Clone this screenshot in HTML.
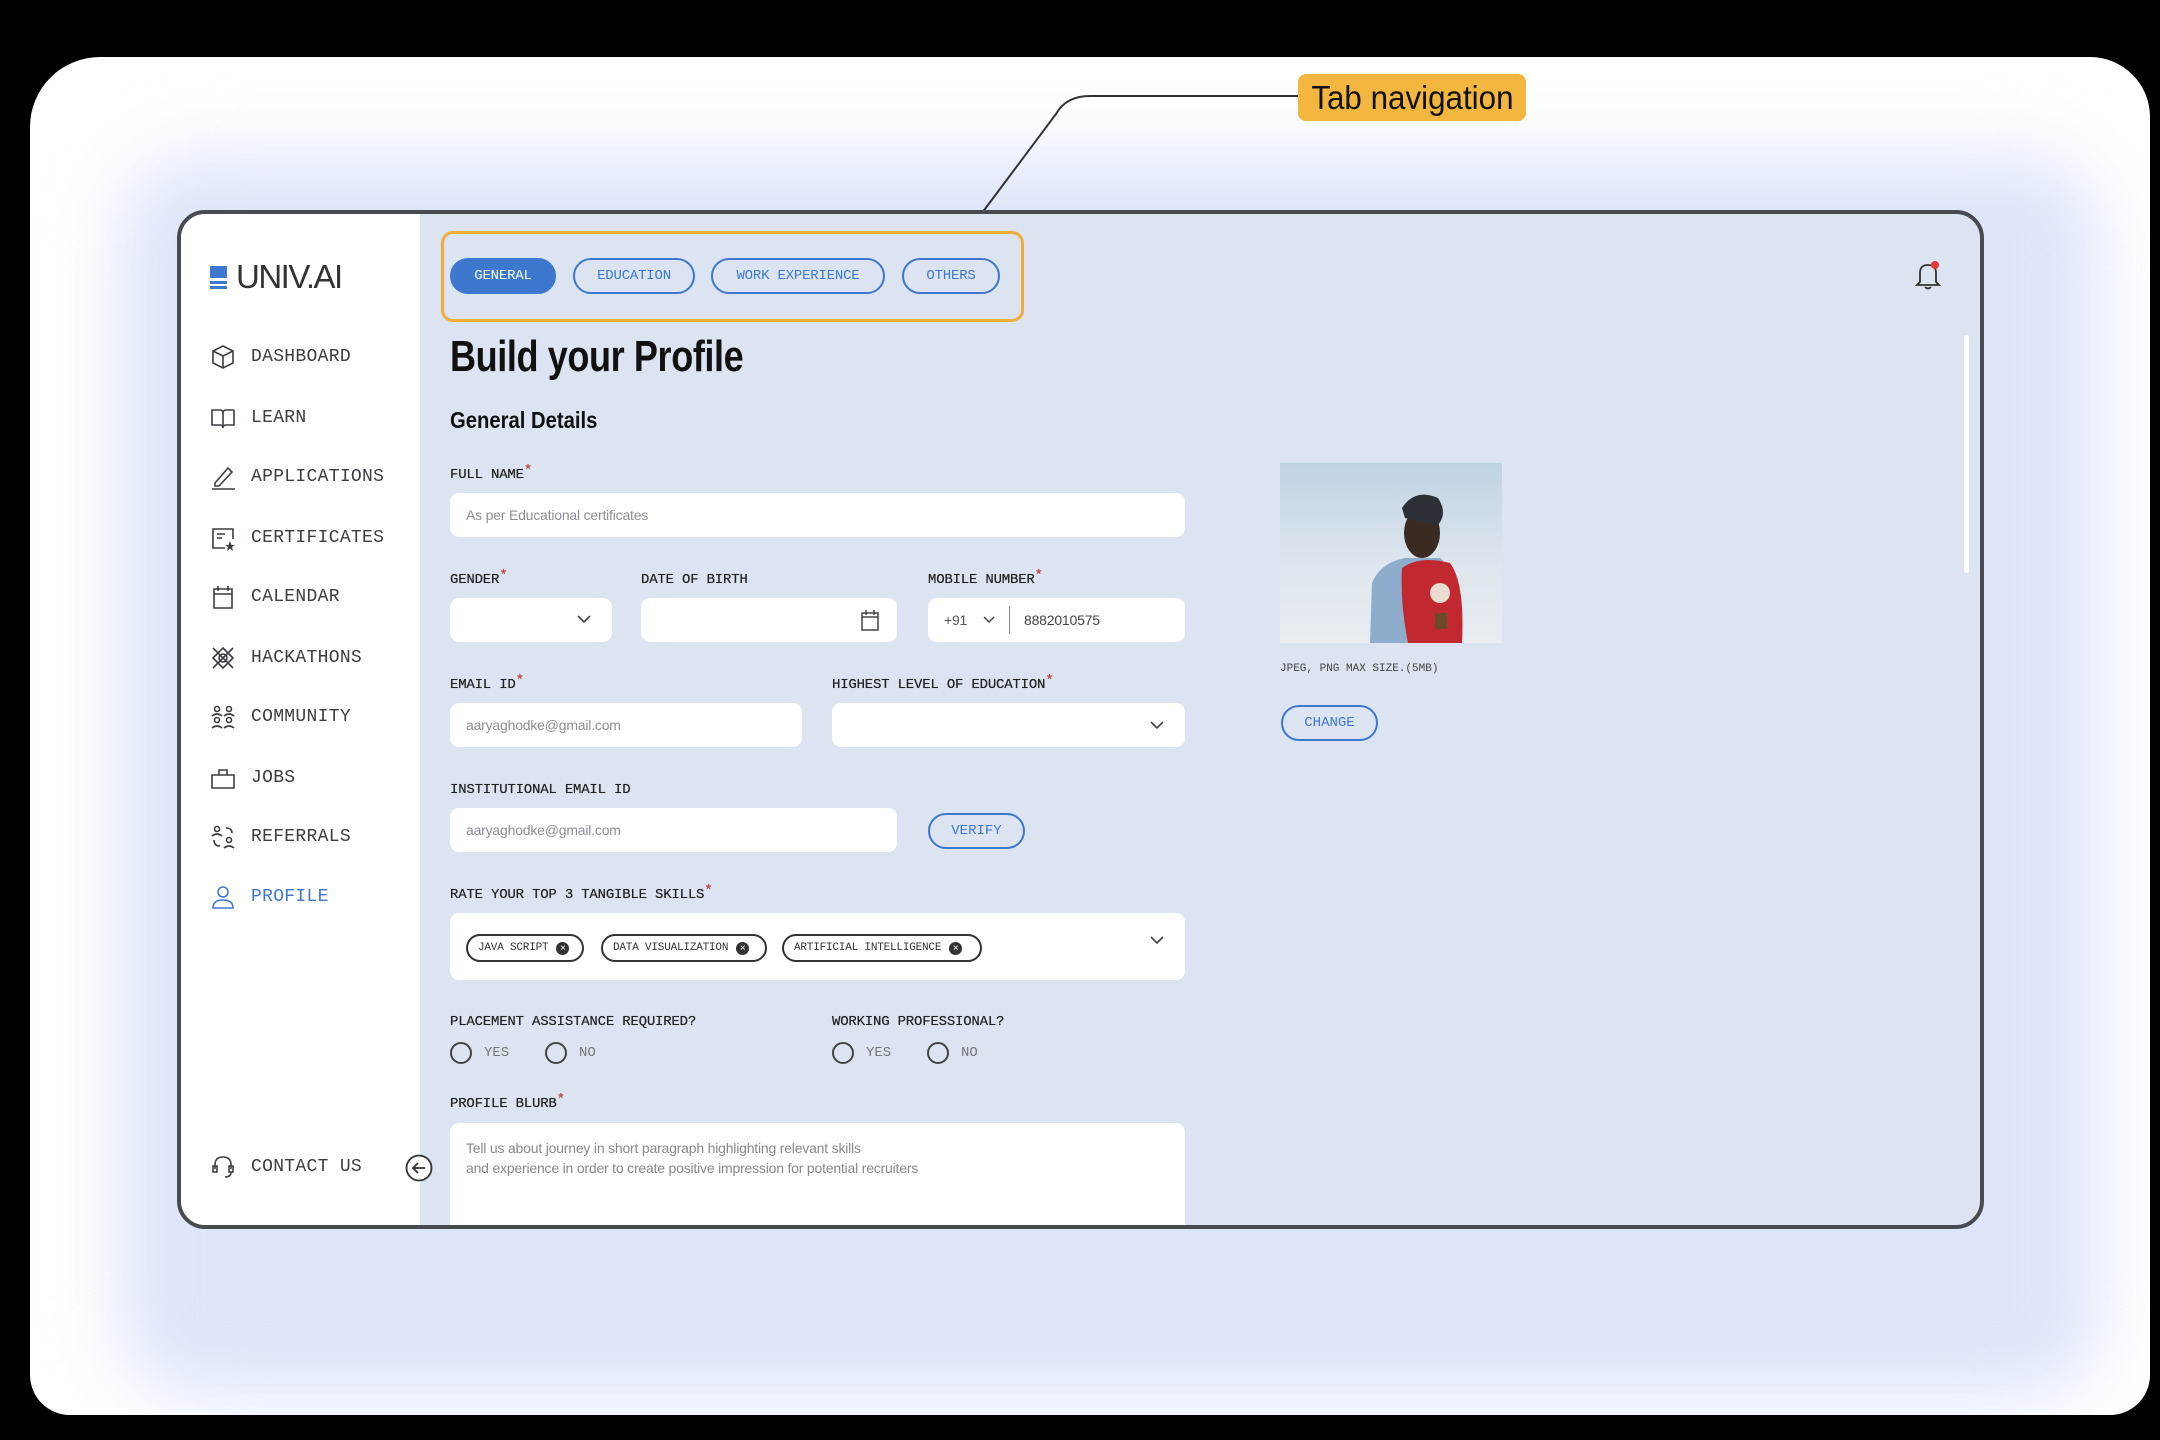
<!DOCTYPE html>
<html><head><meta charset="utf-8">
<style>
*{box-sizing:border-box;margin:0;padding:0}
body{width:2160px;height:1440px;background:#000;position:relative;overflow:hidden;font-family:"Liberation Sans",sans-serif}
.frame{position:absolute;left:30px;top:57px;width:2120px;height:1358px;background:#fff;border-radius:70px 60px 40px 40px;overflow:hidden}
.glow{position:absolute;left:90px;top:100px;width:1980px;height:1240px;background:#dde5fa;filter:blur(35px);border-radius:80px}
.card{position:absolute;left:177px;top:210px;width:1807px;height:1019px;border:4px solid #474a4f;border-radius:28px;background:#dbe4f0;overflow:hidden}
.side{position:absolute;left:0;top:0;width:239px;height:100%;background:#fff}
.mono{font-family:"Liberation Mono",monospace}
.nav{position:absolute;left:28px;display:flex;align-items:center;font-family:"Liberation Mono",monospace;font-size:18px;color:#3a3d42;letter-spacing:.3px}
.nav svg{width:28px;height:28px;margin-right:14px;fill:none;stroke:#3a3d42;stroke-width:1.6}
.abs{position:absolute}
.lbl{position:absolute;font-family:"Liberation Mono",monospace;font-size:14px;color:#222;letter-spacing:-.2px;font-weight:bold;-webkit-text-stroke:0}
.lbl{font-weight:normal;text-shadow:0 0 .4px #222}
.lbl b{color:#e03b3b;font-weight:normal;position:relative;top:-4px}
.inp{position:absolute;background:#fff;border-radius:9px}
.ph{position:absolute;font-size:14px;color:#8a8f96;letter-spacing:-.2px}
.tab{position:absolute;top:44px;height:36px;border:2px solid #3d78cf;border-radius:18px;font-family:"Liberation Mono",monospace;font-size:14px;color:#3d78cf;display:flex;align-items:center;justify-content:center;letter-spacing:-.2px}
.chip{position:absolute;top:21px;height:28px;border:2px solid #333;border-radius:14px;font-family:"Liberation Mono",monospace;font-size:11px;color:#333;display:flex;align-items:center;padding-left:10px;letter-spacing:-.2px}
.chip i{display:inline-block;width:13px;height:13px;border-radius:50%;background:#333;color:#fff;font-style:normal;font-size:10px;line-height:13px;text-align:center;margin-left:8px;font-family:"Liberation Sans",sans-serif}
.radio{position:absolute;width:22px;height:22px;border:2px solid #444;border-radius:50%}
.rl{position:absolute;font-family:"Liberation Mono",monospace;font-size:14px;color:#777}
</style></head><body>
<div class="frame"><div class="glow"></div></div>

<svg class="abs" style="left:0;top:0" width="2160" height="300">
<path d="M1298 96 H1090 Q1066 96 1056 114 L970 229" stroke="#333" stroke-width="2" fill="none"/>
<rect x="965" y="224" width="9" height="9" fill="#333"/>
</svg>
<div class="abs" style="left:1298px;top:74px;width:228px;height:47px;background:#f3b63f;border-radius:8px;font-size:33px;color:#111;display:flex;align-items:center;justify-content:center"><span style="display:inline-block;transform:scaleX(.95)">Tab navigation</span></div>

<div class="card">
 <div class="side">
  <div class="abs" style="left:29px;top:52px;width:17px;height:12px;background:#3d78cf"></div>
  <div class="abs" style="left:29px;top:67px;width:17px;height:3px;background:#3d78cf"></div>
  <div class="abs" style="left:29px;top:72px;width:17px;height:3px;background:#3d78cf"></div>
  <div class="abs" style="left:55px;top:44px;font-size:33px;color:#333;letter-spacing:-1.5px">UNIV.AI</div>

  <div class="nav" style="top:129px"><svg viewBox="0 0 28 28"><path d="M14 3 L24 8 V20 L14 25 L4 20 V8 Z M4 8 L14 13 L24 8 M14 13 V25"/></svg>DASHBOARD</div>
  <div class="nav" style="top:190px"><svg viewBox="0 0 28 28"><path d="M3 6 H11 Q14 6 14 9 V24 Q14 21 11 21 H3 Z M25 6 H17 Q14 6 14 9 M25 6 V21 H17 Q14 21 14 24"/></svg>LEARN</div>
  <div class="nav" style="top:249px"><svg viewBox="0 0 28 28"><path d="M6 20 L19 5 L23 9 L10 23 H6 Z M3 26 H26"/></svg>APPLICATIONS</div>
  <div class="nav" style="top:310px"><svg viewBox="0 0 28 28"><path d="M16 24 H4 V5 H24 V15 M8 10 H16 M8 14 H13"/><path d="M21 17 L22.5 21 L26 21 L23 23 L24 27 L21 24.5 L18 27 L19 23 L16 21 L19.5 21Z" fill="#3a3d42" stroke="none"/></svg>CERTIFICATES</div>
  <div class="nav" style="top:369px"><svg viewBox="0 0 28 28"><path d="M5 6 H23 V25 H5 Z M5 11 H23 M9 3 V8 M19 3 V8"/></svg>CALENDAR</div>
  <div class="nav" style="top:430px"><svg viewBox="0 0 28 28"><path d="M14 4 L24 14 L14 24 L4 14 Z M4 4 L24 24 M24 4 L4 24"/><circle cx="14" cy="14" r="4"/></svg>HACKATHONS</div>
  <div class="nav" style="top:489px"><svg viewBox="0 0 28 28"><circle cx="8" cy="6" r="2.5"/><circle cx="20" cy="6" r="2.5"/><circle cx="8" cy="17" r="2.5"/><circle cx="20" cy="17" r="2.5"/><path d="M3 13 Q8 9 13 13 M15 13 Q20 9 25 13 M3 25 Q8 21 13 25 M15 25 Q20 21 25 25"/></svg>COMMUNITY</div>
  <div class="nav" style="top:550px"><svg viewBox="0 0 28 28"><path d="M3 11 H25 V24 H3 Z M10 11 V6 H18 V11"/></svg>JOBS</div>
  <div class="nav" style="top:609px"><svg viewBox="0 0 28 28"><circle cx="8" cy="6" r="2.5"/><circle cx="20" cy="17" r="2.5"/><path d="M3 13 Q8 9 13 13 M15 25 Q20 21 25 25 M17 5 Q23 5 23 10 M5 17 Q5 23 11 23"/></svg>REFERRALS</div>
  <div class="nav" style="top:669px;color:#3d78cf"><svg viewBox="0 0 28 28" style="stroke:#3d78cf"><circle cx="14" cy="9" r="5"/><path d="M4 25 Q4 17 14 17 Q24 17 24 25 Z"/></svg>PROFILE</div>
  <div class="nav" style="top:939px"><svg viewBox="0 0 28 28"><path d="M6 16 V12 Q6 4 14 4 Q22 4 22 12 V16 M4 13 H8 V19 H4 Z M20 13 H24 V19 H20 Z M22 19 Q22 24 16 24"/></svg>CONTACT US</div>
 </div>
 <svg class="abs" style="left:223px;top:939px" width="30" height="30" viewBox="0 0 30 30"><circle cx="15" cy="15" r="12.5" fill="#fff" stroke="#333" stroke-width="1.8"/><path d="M21 15 H9 M14 10 L9 15 L14 20" stroke="#333" stroke-width="1.8" fill="none"/></svg>

 <div class="abs" style="left:260px;top:17px;width:583px;height:91px;border:3px solid #f0ad3a;border-radius:12px"></div>
 <div class="tab" style="left:269px;width:106px;background:#3d78cf;color:#fff">GENERAL</div>
 <div class="tab" style="left:392px;width:122px">EDUCATION</div>
 <div class="tab" style="left:530px;width:174px">WORK EXPERIENCE</div>
 <div class="tab" style="left:721px;width:98px">OTHERS</div>

 <svg class="abs" style="left:1732px;top:44px" width="30" height="34" viewBox="0 0 30 34"><path d="M7 24 V15 Q7 7 15 7 Q23 7 23 15 V24 L26 27 H4 Z M12 29 Q15 32 18 29" stroke="#333" stroke-width="1.8" fill="none"/><circle cx="22" cy="7" r="4" fill="#e53935"/></svg>
 <div class="abs" style="left:1783px;top:121px;width:5px;height:238px;background:#fff;border-radius:3px"></div>

 <div class="abs" style="left:269px;top:118px;font-size:44px;font-weight:bold;color:#111;transform:scaleX(.82);transform-origin:left;white-space:nowrap;letter-spacing:-.5px">Build your Profile</div>
 <div class="abs" style="left:269px;top:193px;font-size:23px;font-weight:bold;color:#111;transform:scaleX(.88);transform-origin:left;white-space:nowrap">General Details</div>

 <div class="lbl" style="left:269px;top:253px">FULL NAME<b>*</b></div>
 <div class="inp" style="left:269px;top:279px;width:735px;height:44px"></div>
 <div class="ph" style="left:285px;top:293px">As per Educational certificates</div>

 <div class="lbl" style="left:269px;top:358px">GENDER<b>*</b></div>
 <div class="lbl" style="left:460px;top:358px">DATE OF BIRTH</div>
 <div class="lbl" style="left:747px;top:358px">MOBILE NUMBER<b>*</b></div>
 <div class="inp" style="left:269px;top:384px;width:162px;height:44px"></div>
 <svg class="abs" style="left:395px;top:399px" width="16" height="12"><path d="M2 3 L8 9 L14 3" stroke="#444" stroke-width="1.6" fill="none"/></svg>
 <div class="inp" style="left:460px;top:384px;width:256px;height:44px"></div>
 <svg class="abs" style="left:679px;top:394px" width="20" height="24" viewBox="0 0 20 24"><path d="M2 5 H18 V22 H2 Z M2 9 H18 M6 2 V7 M14 2 V7" stroke="#444" stroke-width="1.5" fill="none"/></svg>
 <div class="inp" style="left:747px;top:384px;width:257px;height:44px"></div>
 <div class="ph" style="left:763px;top:398px;color:#555">+91</div>
 <svg class="abs" style="left:801px;top:401px" width="14" height="10"><path d="M2 2 L7 7 L12 2" stroke="#444" stroke-width="1.5" fill="none"/></svg>
 <div class="abs" style="left:828px;top:392px;width:1px;height:28px;background:#888"></div>
 <div class="ph" style="left:843px;top:398px;color:#444">8882010575</div>

 <div class="lbl" style="left:269px;top:463px">EMAIL ID<b>*</b></div>
 <div class="lbl" style="left:651px;top:463px">HIGHEST LEVEL OF EDUCATION<b>*</b></div>
 <div class="inp" style="left:269px;top:489px;width:352px;height:44px"></div>
 <div class="ph" style="left:285px;top:503px">aaryaghodke@gmail.com</div>
 <div class="inp" style="left:651px;top:489px;width:353px;height:44px"></div>
 <svg class="abs" style="left:968px;top:505px" width="16" height="12"><path d="M2 3 L8 9 L14 3" stroke="#444" stroke-width="1.6" fill="none"/></svg>

 <div class="lbl" style="left:269px;top:568px">INSTITUTIONAL EMAIL ID</div>
 <div class="inp" style="left:269px;top:594px;width:447px;height:44px"></div>
 <div class="ph" style="left:285px;top:608px">aaryaghodke@gmail.com</div>
 <div class="abs mono" style="left:747px;top:599px;width:97px;height:36px;border:2px solid #3d78cf;border-radius:18px;color:#3d78cf;font-size:14px;display:flex;align-items:center;justify-content:center">VERIFY</div>

 <div class="lbl" style="left:269px;top:673px">RATE YOUR TOP 3 TANGIBLE SKILLS<b>*</b></div>
 <div class="inp" style="left:269px;top:699px;width:735px;height:67px">
  <div class="chip" style="left:16px;width:118px">JAVA SCRIPT<i>×</i></div>
  <div class="chip" style="left:151px;width:166px">DATA VISUALIZATION<i>×</i></div>
  <div class="chip" style="left:332px;width:200px">ARTIFICIAL INTELLIGENCE<i>×</i></div>
  <svg class="abs" style="left:699px;top:21px" width="16" height="12"><path d="M2 3 L8 9 L14 3" stroke="#444" stroke-width="1.6" fill="none"/></svg>
 </div>

 <div class="lbl" style="left:269px;top:800px">PLACEMENT ASSISTANCE REQUIRED?</div>
 <div class="lbl" style="left:651px;top:800px">WORKING PROFESSIONAL?</div>
 <div class="radio" style="left:269px;top:828px"></div><div class="rl" style="left:303px;top:831px">YES</div>
 <div class="radio" style="left:364px;top:828px"></div><div class="rl" style="left:398px;top:831px">NO</div>
 <div class="radio" style="left:651px;top:828px"></div><div class="rl" style="left:685px;top:831px">YES</div>
 <div class="radio" style="left:746px;top:828px"></div><div class="rl" style="left:780px;top:831px">NO</div>

 <div class="lbl" style="left:269px;top:882px">PROFILE BLURB<b>*</b></div>
 <div class="inp" style="left:269px;top:909px;width:735px;height:140px"></div>
 <div class="ph" style="left:285px;top:924px;line-height:20px;color:#888">Tell us about journey in short paragraph highlighting relevant skills<br>and experience in order to create positive impression for potential recruiters</div>

 <svg class="abs" style="left:1099px;top:249px" width="222" height="180" viewBox="0 0 222 180">
  <defs><linearGradient id="sky" x1="0" y1="0" x2="0" y2="1"><stop offset="0" stop-color="#bfd3e3"/><stop offset=".6" stop-color="#dfe7ee"/><stop offset="1" stop-color="#e8edf1"/></linearGradient></defs>
  <rect width="222" height="180" fill="url(#sky)"/>
  <path d="M90 180 L92 120 Q100 100 125 95 L160 95 Q180 110 180 180 Z" fill="#8eaccc"/>
  <ellipse cx="142" cy="70" rx="18" ry="25" fill="#3a2a22"/>
  <path d="M122 45 Q135 25 158 35 Q168 50 158 62 L125 55 Z" fill="#2c2f36"/>
  <path d="M122 105 Q140 92 170 100 Q185 120 182 180 L128 180 Q120 140 122 105 Z" fill="#c2282f"/>
  <circle cx="160" cy="130" r="10" fill="#e8ddd0"/>
  <rect x="155" y="150" width="12" height="16" fill="#6b4a2a"/>
 </svg>
 <div class="abs mono" style="left:1099px;top:449px;font-size:11px;color:#444">JPEG, PNG MAX SIZE.(5MB)</div>
 <div class="abs mono" style="left:1100px;top:491px;width:97px;height:36px;border:2px solid #3d78cf;border-radius:18px;color:#3d78cf;font-size:14px;display:flex;align-items:center;justify-content:center">CHANGE</div>
</div>
</body></html>
